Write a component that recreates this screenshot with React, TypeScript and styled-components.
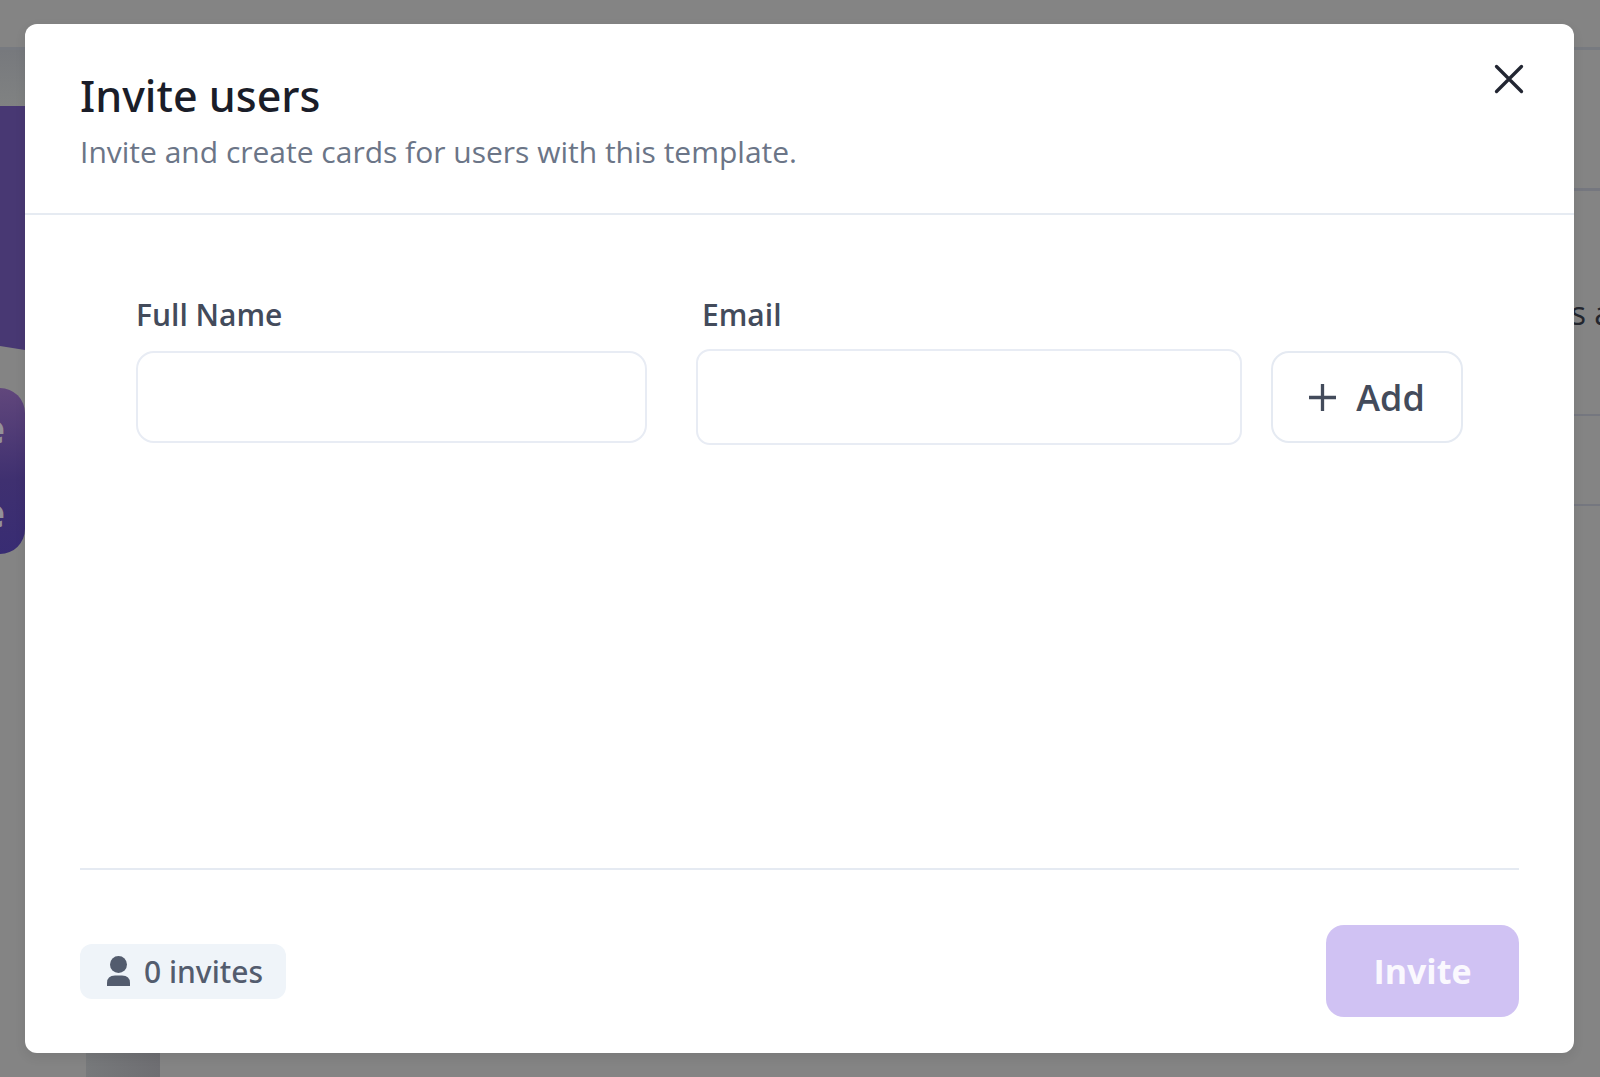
import React, { useState } from 'react';
import styled, { createGlobalStyle } from 'styled-components';

const GlobalStyle = createGlobalStyle`
  *, *::before, *::after { box-sizing: border-box; }
  body { margin: 0; background: #848484; font-family: 'Open Sans', 'Noto Sans', sans-serif; }
  button, input { font: inherit; }
`;

const Screen = styled.div`
  position: relative;
  display: flex;
  min-height: 100vh;
  padding: 24px 26px 24px 25px;
  overflow: hidden;
`;

const Backdrop = styled.div`
  position: absolute;
  inset: 0;
  display: flex;
  flex-direction: column;
  overflow: hidden;
`;

const TopBar = styled.div`
  flex: none;
  height: 50px;
  border-bottom: 3px solid #777a80;
`;

const Columns = styled.div`
  display: flex;
  flex: 1;
`;

const Preview = styled.div`
  display: flex;
  flex-direction: column;
  width: 160px;
`;

const PreviewHead = styled.div`
  height: 56px;
  background: linear-gradient(#77797d, #808282);
`;

const Banner = styled.div`
  height: 244px;
  background: #483873;
  clip-path: polygon(0 0, 100% 0, 100% 100%, 25px 100%, 0 calc(100% - 4px));
`;

const CardTile = styled.div`
  display: flex;
  flex-direction: column;
  justify-content: center;
  align-items: flex-end;
  width: 25px;
  height: 166px;
  margin-top: 38px;
  padding-right: 20px;
  border-radius: 0 28px 28px 0;
  background: linear-gradient(175deg, #61477c, #3f3070 55%, #382c73);
  color: #939198;
  font-size: 40px;
  font-weight: 800;
  line-height: 84px;
`;

const Footing = styled.div`
  width: 74px;
  margin: auto 0 0 86px;
  height: 28px;
  background: linear-gradient(90deg, #77797b, #6e6e72);
`;

const Settings = styled.div`
  flex: 1;
`;

const Section = styled.div<{ $height: number; $line: number }>`
  display: flex;
  justify-content: flex-end;
  align-items: center;
  height: ${p => p.$height}px;
  border-bottom: ${p => p.$line}px solid #75777f;
`;

const SectionText = styled.span`
  margin-right: -12px;
  padding-top: 20px;
  color: #23262e;
  font-size: 32px;
  line-height: 40px;
`;

const Dialog = styled.section`
  position: relative;
  display: flex;
  flex: 1;
  flex-direction: column;
  border-radius: 12px;
  background: #fff;
  box-shadow: 0 4px 12px rgba(0, 0, 0, 0.08);
`;

const Header = styled.header`
  display: flex;
  justify-content: space-between;
  align-items: flex-start;
  padding: 40px 50px 40px 55px;
  border-bottom: 2px solid #e6ebf2;
`;

const Title = styled.h1`
  margin: 0;
  color: #1a1d29;
  font-family: 'Noto Sans', 'Open Sans', sans-serif;
  font-size: 43px;
  font-weight: 500;
  line-height: 64px;
`;

const Subtitle = styled.p`
  margin: 0;
  color: #6b7587;
  font-size: 30px;
  line-height: 48px;
  margin-bottom: -3px;
`;

const CloseButton = styled.button`
  display: flex;
  padding: 0;
  border: 0;
  background: none;
  color: #222632;
`;

const Form = styled.form`
  display: flex;
  flex: 1;
  flex-direction: column;
  padding: 76px 55px 36px;
`;

const Fields = styled.div`
  display: grid;
  grid-template-columns: 531fr 546fr auto;
  column-gap: 29px;
  align-items: center;
  padding: 0 56px;
`;

const Label = styled.label`
  margin-bottom: 10px;
  color: #434b5b;
  font-size: 30px;
  font-weight: 600;
  line-height: 48px;
`;

const EmailLabel = styled(Label)`
  padding-left: 6px;
`;

const TextInput = styled.input`
  width: 100%;
  height: 96px;
  padding: 0 24px;
  border: 2px solid #e8ecf4;
  border-radius: 14px;
  background: #fff;
  color: #434b5b;
  font-size: 30px;
`;

const NameInput = styled(TextInput)`
  width: calc(100% - 20px);
  height: 92px;
  border-radius: 18px;
`;

const AddButton = styled.button`
  display: flex;
  grid-column: 3;
  justify-content: center;
  align-items: center;
  gap: 20px;
  width: 192px;
  height: 92px;
  padding: 0;
  border: 2px solid #e5eaf2;
  border-radius: 18px;
  background: #fff;
  color: #434b5b;
  font-size: 36px;
  font-weight: 600;
`;

const Footer = styled.footer`
  display: flex;
  justify-content: space-between;
  align-items: center;
  margin-top: auto;
  padding-top: 55px;
  border-top: 2px solid #e5eaf2;
`;

const Badge = styled.output`
  display: flex;
  align-items: center;
  gap: 14px;
  height: 55px;
  padding: 0 23px 0 27px;
  border-radius: 12px;
  background: #eff4f9;
  color: #535c6e;
  font-family: 'Noto Sans', 'Open Sans', sans-serif;
  font-size: 30px;
  font-weight: 500;
`;

const InviteButton = styled.button`
  width: 193px;
  height: 92px;
  padding: 0;
  border: 0;
  border-radius: 18px;
  background: #d0c2f3;
  color: #faf8fe;
  font-size: 34px;
  font-weight: 700;
`;

export default function App() {
  const [name, setName] = useState('');
  const [email, setEmail] = useState('');
  return (
    <Screen>
      <GlobalStyle />
      <Backdrop aria-hidden="true">
        <TopBar />
        <Columns>
          <Preview>
            <PreviewHead />
            <Banner />
            <CardTile><span>e</span><span>e</span></CardTile>
            <Footing />
          </Preview>
          <Settings>
            <Section $height={141} $line={3} />
            <Section $height={225} $line={2}><SectionText>s a</SectionText></Section>
            <Section $height={90} $line={2} />
          </Settings>
        </Columns>
      </Backdrop>
      <Dialog role="dialog" aria-labelledby="invite-title">
        <Header>
          <div>
            <Title id="invite-title">Invite users</Title>
            <Subtitle>Invite and create cards for users with this template.</Subtitle>
          </div>
          <CloseButton type="button" aria-label="Close">
            <svg width="30" height="30" viewBox="0 0 30 30" fill="none" stroke="currentColor" strokeWidth="3.300" strokeLinecap="round">
              <path d="M2.500 2.500L27.500 27.500M27.500 2.500L2.500 27.500" />
            </svg>
          </CloseButton>
        </Header>
        <Form onSubmit={e => e.preventDefault()}>
          <Fields>
            <Label htmlFor="full-name">Full Name</Label>
            <EmailLabel htmlFor="email">Email</EmailLabel>
            <span />
            <NameInput id="full-name" value={name} onChange={e => setName(e.target.value)} />
            <TextInput id="email" type="email" value={email} onChange={e => setEmail(e.target.value)} />
            <AddButton type="button">
              <svg width="27" height="27" viewBox="0 0 27 27" fill="none" stroke="currentColor" strokeWidth="3.300">
                <path d="M13.500 0V27M0 13.500H27" />
              </svg>
              Add
            </AddButton>
          </Fields>
          <Footer>
            <Badge>
              <svg width="23" height="30" viewBox="0 0 23 30" fill="currentColor">
                <circle cx="11.500" cy="8.500" r="8.500" />
                <path d="M0 30V27Q0 19.500 8 19.500H15Q23 19.500 23 27V30Z" />
              </svg>
              0 invites
            </Badge>
            <InviteButton type="submit">Invite</InviteButton>
          </Footer>
        </Form>
      </Dialog>
    </Screen>
  );
}
